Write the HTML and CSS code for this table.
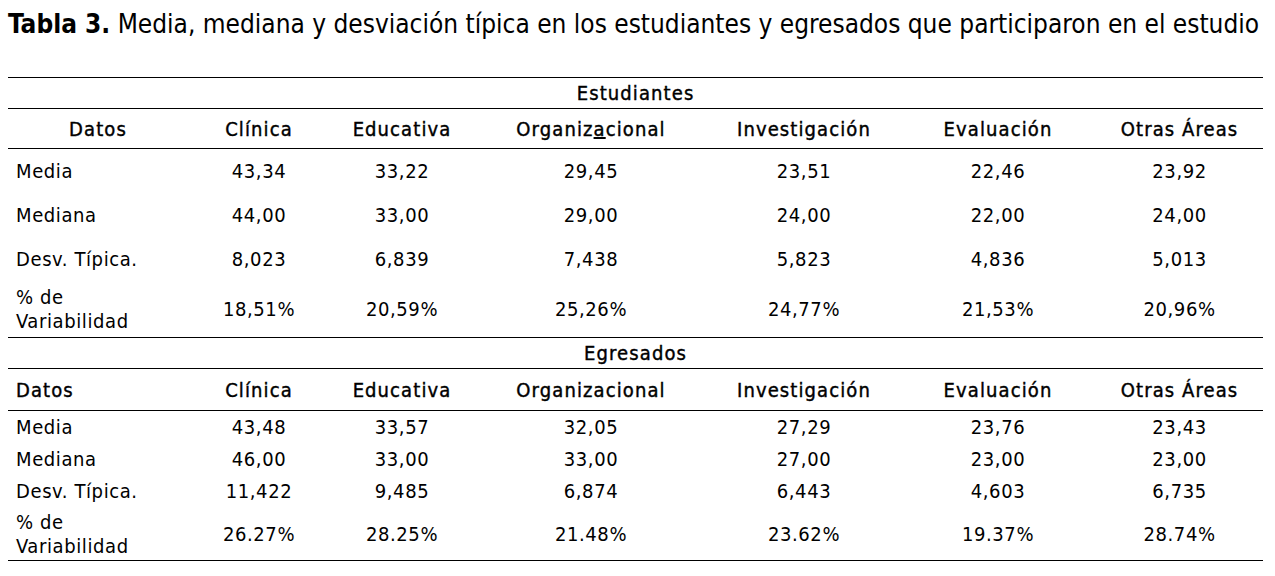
FILE: index.html
```html
<!DOCTYPE html>
<html lang="es">
<head>
<meta charset="utf-8">
<title>Tabla 3</title>
<link rel="stylesheet" href="styles.css">
</head>
<body>
<h1 class="caption"><span class="label">Tabla 3.</span> Media, mediana y desviación típica en los estudiantes y egresados que participaron en el estudio</h1>
<table class="stats">
  <colgroup>
    <col class="c1"><col class="c2"><col class="c3"><col class="c4"><col class="c5"><col class="c6"><col class="c7">
  </colgroup>
  <tbody>
    <tr class="group"><th colspan="7">Estudiantes</th></tr>
    <tr class="head head-a">
      <th class="first-center">Datos</th><th>Clínica</th><th>Educativa</th><th>Organiz<u>a</u>cional</th><th>Investigación</th><th>Evaluación</th><th>Otras Áreas</th>
    </tr>
    <tr class="r-a1"><td class="name">Media</td><td>43,34</td><td>33,22</td><td>29,45</td><td>23,51</td><td>22,46</td><td>23,92</td></tr>
    <tr class="r-a2"><td class="name">Mediana</td><td>44,00</td><td>33,00</td><td>29,00</td><td>24,00</td><td>22,00</td><td>24,00</td></tr>
    <tr class="r-a3"><td class="name">Desv. Típica.</td><td>8,023</td><td>6,839</td><td>7,438</td><td>5,823</td><td>4,836</td><td>5,013</td></tr>
    <tr class="r-a4 last"><td class="name two">% de<br>Variabilidad</td><td>18,51%</td><td>20,59%</td><td>25,26%</td><td>24,77%</td><td>21,53%</td><td>20,96%</td></tr>
    <tr class="group"><th colspan="7">Egresados</th></tr>
    <tr class="head head-b">
      <th class="first-left">Datos</th><th>Clínica</th><th>Educativa</th><th>Organizacional</th><th>Investigación</th><th>Evaluación</th><th>Otras Áreas</th>
    </tr>
    <tr class="r-b"><td class="name">Media</td><td>43,48</td><td>33,57</td><td>32,05</td><td>27,29</td><td>23,76</td><td>23,43</td></tr>
    <tr class="r-b"><td class="name">Mediana</td><td>46,00</td><td>33,00</td><td>33,00</td><td>27,00</td><td>23,00</td><td>23,00</td></tr>
    <tr class="r-b"><td class="name">Desv. Típica.</td><td>11,422</td><td>9,485</td><td>6,874</td><td>6,443</td><td>4,603</td><td>6,735</td></tr>
    <tr class="r-b4 last"><td class="name two">% de<br>Variabilidad</td><td>26.27%</td><td>28.25%</td><td>21.48%</td><td>23.62%</td><td>19.37%</td><td>28.74%</td></tr>
  </tbody>
</table>
</body>
</html>
```

FILE: styles.css
```css
html, body {
  margin: 0;
  padding: 0;
  background: #fff;
}
body {
  padding: 0 12px 0 8px;
  font-family: "DejaVu Sans", "Liberation Sans", sans-serif;
  font-stretch: condensed;
  color: #000;
}
.caption {
  margin: 0;
  padding-top: 8px;
  font-size: 26px;
  line-height: 32px;
  font-weight: normal;
  white-space: nowrap;
}
.caption .label {
  font-weight: bold;
}
.stats {
  margin-top: 37px;
  width: 1255px;
  border-collapse: collapse;
  table-layout: fixed;
  font-size: 20px;
  letter-spacing: 0.6px;
}
.c1 { width: 180px; }
.c2 { width: 142px; }
.c3 { width: 144px; }
.c4 { width: 234px; }
.c5 { width: 192px; }
.c6 { width: 196px; }
.c7 { width: 167px; }
.stats th, .stats td {
  padding: 0;
  text-align: center;
  vertical-align: middle;
}
.stats th {
  font-weight: normal;
  letter-spacing: 1.1px;
  -webkit-text-stroke: 0.4px #000;
}
.group th {
  border-top: 1.5px solid #000;
  border-bottom: 1.5px solid #000;
  height: 30px;
}
.head th {
  border-bottom: 1.5px solid #000;
}
.head-a th { height: 39px; }
.head-b th { height: 41px; }
.head .first-left {
  text-align: left;
  padding-left: 8px;
}
.stats td.name {
  text-align: left;
  padding-left: 8px;
}
.stats td.two {
  line-height: 24px;
}
.r-a1 td { height: 44px; }
.r-a2 td { height: 43px; }
.r-a3 td { height: 45px; }
.r-a4 td { height: 56px; }
.r-b td { height: 32px; }
.r-b4 td { height: 53px; }
.last td {
  border-bottom: 1.5px solid #000;
}
```
